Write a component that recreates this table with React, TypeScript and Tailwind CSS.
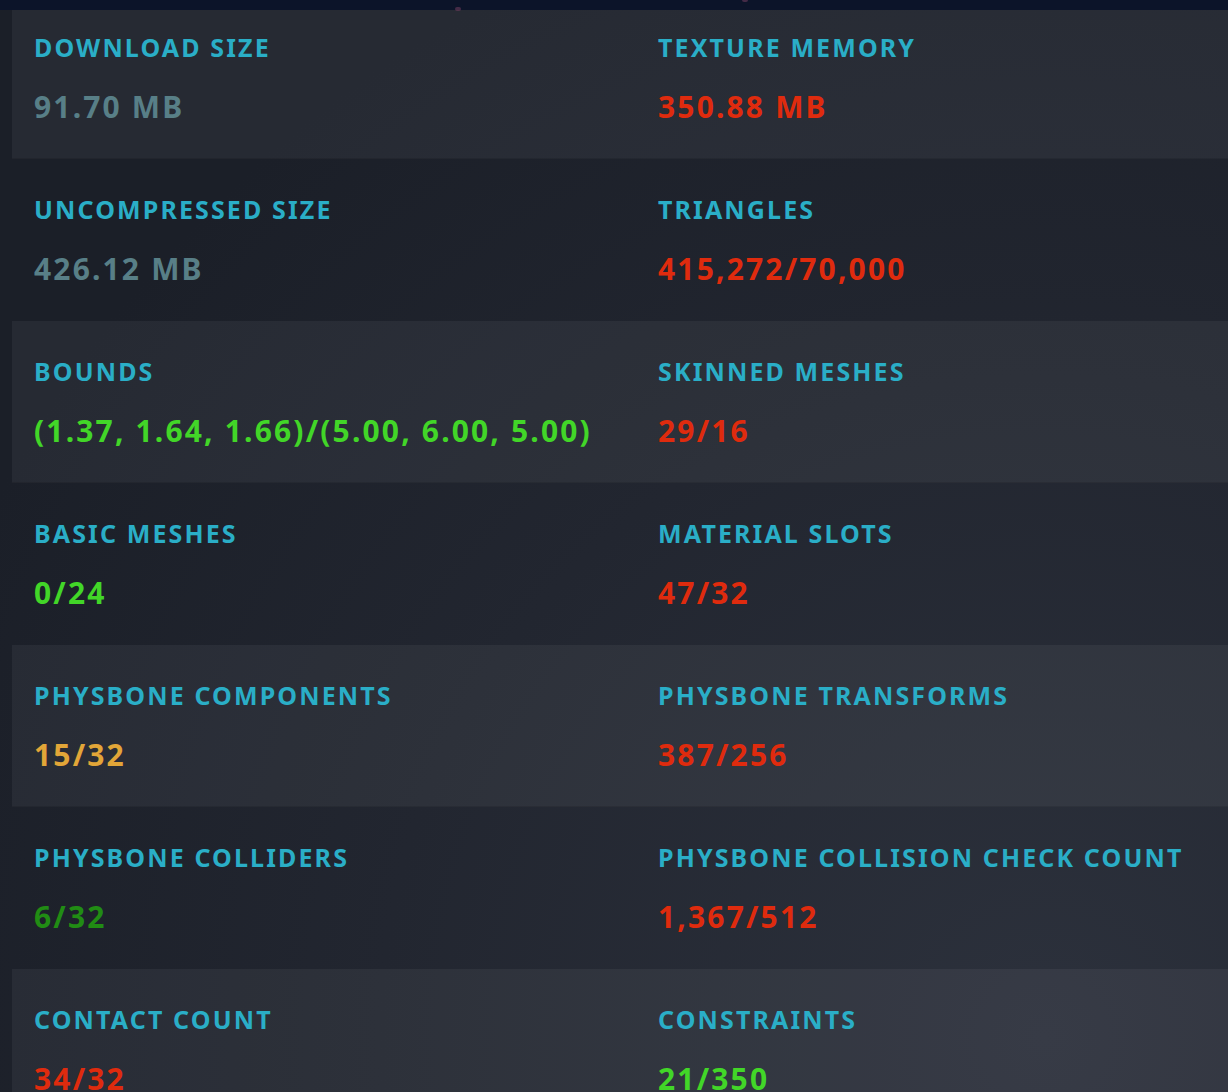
const GREY = "text-[#587f87]";
const RED = "text-[#df2b0e]";
const GREEN = "text-[#42d628]";
const DARKGREEN = "text-[#218c14]";
const ORANGE = "text-[#e2a638]";

type Stat = { label: string; value: string; color: string };

const rows: [Stat, Stat][] = [
  [
    { label: "Download Size", value: "91.70 MB", color: GREY },
    { label: "Texture Memory", value: "350.88 MB", color: RED },
  ],
  [
    { label: "Uncompressed Size", value: "426.12 MB", color: GREY },
    { label: "Triangles", value: "415,272/70,000", color: RED },
  ],
  [
    { label: "Bounds", value: "(1.37, 1.64, 1.66)/(5.00, 6.00, 5.00)", color: GREEN },
    { label: "Skinned Meshes", value: "29/16", color: RED },
  ],
  [
    { label: "Basic Meshes", value: "0/24", color: GREEN },
    { label: "Material Slots", value: "47/32", color: RED },
  ],
  [
    { label: "PhysBone Components", value: "15/32", color: ORANGE },
    { label: "PhysBone Transforms", value: "387/256", color: RED },
  ],
  [
    { label: "PhysBone Colliders", value: "6/32", color: DARKGREEN },
    { label: "PhysBone Collision Check Count", value: "1,367/512", color: RED },
  ],
  [
    { label: "Contact Count", value: "34/32", color: RED },
    { label: "Constraints", value: "21/350", color: GREEN },
  ],
];

function Cell({ stat }: { stat: Stat }) {
  return (
    <div className="flex flex-col">
      <span className="text-[25px] leading-none font-bold uppercase tracking-[0.085em] text-[#2aaec7]">{stat.label}</span>
      <span className={`mt-[32px] text-[30px] leading-none font-bold tracking-[0.072em] ${stat.color}`}>{stat.value}</span>
    </div>
  );
}

export default function App() {
  return (
    <div
      className="relative h-[1092px] w-full overflow-hidden bg-[radial-gradient(ellipse_at_85%_95%,#2c313c_0%,#222630_45%,#1b1f28_80%)]"
      style={{ fontFamily: '"Noto Sans", "Open Sans", sans-serif' }}
    >
      <div className="relative h-[10px] bg-[#0c1429]">
        <span className="absolute left-[455px] top-[7px] h-[4px] w-[6px] rounded-full bg-[#6b3a5a]/60" />
        <span className="absolute left-[742px] top-[-2px] h-[4px] w-[6px] rounded-full bg-[#6b3a5a]/60" />
      </div>
      <div className="pl-[12px]">
        {rows.map((row, i) => (
          <div
            key={i}
            className={`grid grid-cols-[624px_1fr] px-[22px] ${i === 0 ? "h-[149px] pt-[25px]" : "h-[162px] pt-[38px]"} ${i % 2 === 0 ? "bg-white/[0.05] border-b border-black/10" : ""}`}
          >
            <Cell stat={row[0]} />
            <Cell stat={row[1]} />
          </div>
        ))}
      </div>
    </div>
  );
}
